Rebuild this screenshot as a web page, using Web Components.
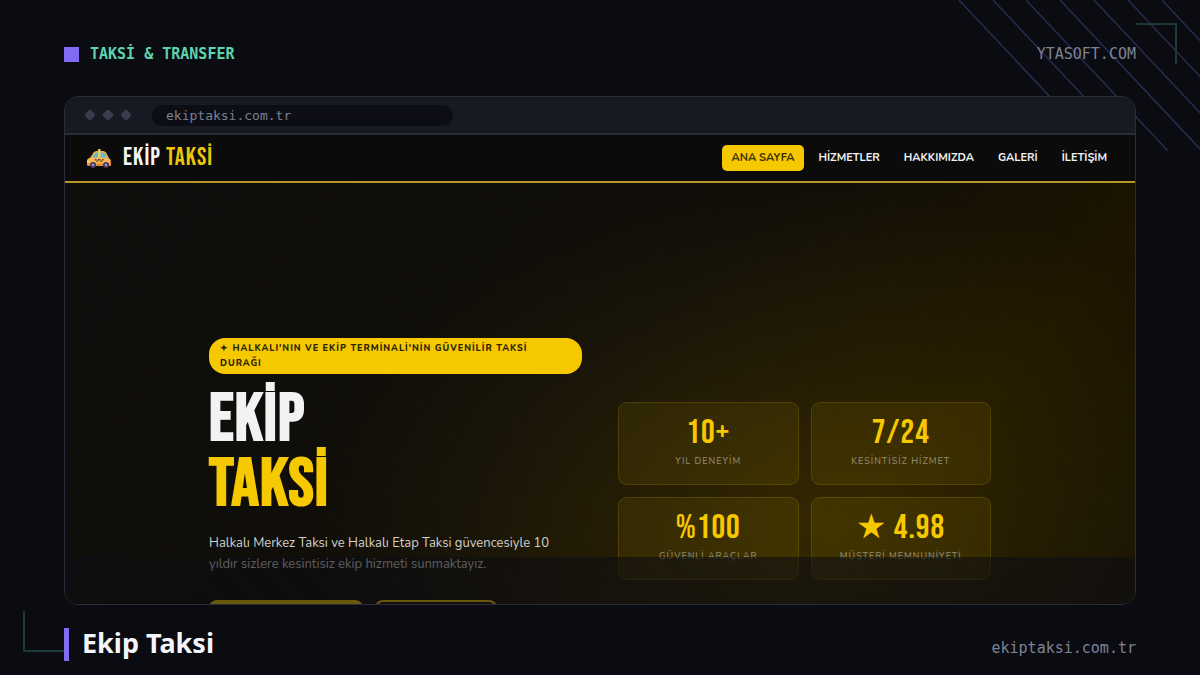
<!DOCTYPE html>
<html lang="tr">
<head>
<meta charset="utf-8">
<title>Ekip Taksi</title>
<style>
  html { height: 100%; }
  body {
    margin: 0;
    height: 100%;
    background: #0b0c11;
    font-family: "Noto Sans", sans-serif;
    color: #f4f5fa;
  }
</style>
</head>
<body>

<showcase-page>
  <a-tag slot="top">TAKSİ &amp; TRANSFER</a-tag>
  <mono-note slot="top">YTASOFT.COM</mono-note>

  <browser-window url="ekiptaksi.com.tr">
    <site-nav>
      <nav-link active>ANA SAYFA</nav-link>
      <nav-link>HİZMETLER</nav-link>
      <nav-link>HAKKIMIZDA</nav-link>
      <nav-link>GALERİ</nav-link>
      <nav-link>İLETİŞİM</nav-link>
    </site-nav>
    <site-hero>
      <stat-card slot="stats" value="10+">YIL DENEYİM</stat-card>
      <stat-card slot="stats" value="7/24">KESİNTİSİZ HİZMET</stat-card>
      <stat-card slot="stats" value="%100">GÜVENLİ ARAÇLAR</stat-card>
      <stat-card slot="stats" value="★ 4.98">MÜŞTERİ MEMNUNİYETİ</stat-card>
    </site-hero>
  </browser-window>

  <page-title slot="bottom">Ekip Taksi</page-title>
  <mono-note slot="bottom">ekiptaksi.com.tr</mono-note>
</showcase-page>

<script>
(function () {
  'use strict';

  const MONO = '"Consolas", "DejaVu Sans Mono", monospace';
  const NARROW = '"Bebas Neue", "Liberation Sans Narrow", sans-serif';
  const ROUND = '"Nunito", "Open Sans", sans-serif';

  function define(name, render) {
    customElements.define(name, class extends HTMLElement {
      connectedCallback() {
        if (this.shadowRoot) return;
        this.attachShadow({ mode: 'open' }).innerHTML = render(this);
      }
    });
  }

  /* ── page frame: top bar, window, bottom bar, decorations ── */
  define('showcase-page', () => `
    <style>
      :host {
        position: relative;
        display: flex;
        flex-direction: column;
        height: 100%;
        box-sizing: border-box;
        padding: 0 64px;
        overflow: hidden;
      }
      header, footer {
        position: relative;
        display: flex;
        box-sizing: border-box;
        justify-content: space-between;
      }
      header { align-items: center; height: 96px; padding-top: 12px; }
      footer { align-items: baseline; height: 70px; padding-top: 23px; }
      main { position: relative; flex: 1; min-height: 0; display: flex; }
      ::slotted(browser-window) { flex: 1; min-width: 0; }
      .lines { position: absolute; top: 0; right: 0; }
      .corner { position: absolute; width: 39px; height: 39px; border: 0 solid #1c3b38; }
      .tr { top: 23px; right: 23px; border-width: 2px 2px 0 0; }
      .bl { bottom: 23px; left: 23px; border-width: 0 0 2px 2px; }
    </style>
    <svg class="lines" width="260" height="151" viewBox="0 0 260 151" stroke="#2e2b56" stroke-width="1.4" aria-hidden="true">
      <path d="M19 0l142 151M53 0l142 151M86 0l142 151M120 0l142 151M154 0l142 151M188 0l142 151M222 0l142 151"/>
    </svg>
    <div class="corner tr"></div>
    <div class="corner bl"></div>
    <header><slot name="top"></slot></header>
    <main><slot></slot></main>
    <footer><slot name="bottom"></slot></footer>
  `);

  define('a-tag', () => `
    <style>
      :host { display: flex; align-items: center; gap: 11px; font: bold 15px/20px ${MONO}; color: #5dd3b0; }
      i { width: 15px; height: 15px; background: #7f6cf0; }
    </style>
    <i></i><span><slot></slot></span>
  `);

  define('mono-note', () => `
    <style>
      :host { display: block; font: 15px/20px ${MONO}; color: #7f8294; }
    </style>
    <slot></slot>
  `);

  define('page-title', () => `
    <style>
      :host { display: block; }
      h2 {
        margin: 0;
        padding: 0 0 3px 13px;
        border-left: 5px solid #7f6cf0;
        font: bold 27px/30px "Segoe UI", "Noto Sans", sans-serif;
        color: #f4f5fa;
      }
    </style>
    <h2><slot></slot></h2>
  `);

  /* ── browser chrome ── */
  define('browser-window', (el) => `
    <style>
      :host {
        display: flex;
        flex-direction: column;
        box-sizing: border-box;
        border: 1px solid #2b2d3a;
        border-radius: 14px;
        overflow: hidden;
        background: #0c0c0c;
      }
      .bar {
        flex: none;
        display: flex;
        align-items: center;
        gap: 13px;
        height: 36px;
        padding-left: 20px;
        background: #171a22;
        border-bottom: 2px solid #2a2c38;
      }
      svg { margin-right: 8px; }
      .url {
        width: 301px;
        padding-left: 14px;
        box-sizing: border-box;
        border-radius: 10px;
        background: #0d0e15;
        font: 13px/21px ${MONO};
        color: #7d8091;
      }
      .view { position: relative; flex: 1; min-height: 0; overflow: hidden; }
      .shade { position: absolute; inset: auto 0 0 0; height: 47px; background: rgba(13, 14, 18, 0.6); }
    </style>
    <div class="bar">
      <svg width="46" height="10" viewBox="0 0 46 10" fill="#3a3b4c" aria-hidden="true">
        <path d="M4 0h2l4 4v2l-4 4h-2l-4-4v-2z"/>
        <path d="M22 0h2l4 4v2l-4 4h-2l-4-4v-2z"/>
        <path d="M40 0h2l4 4v2l-4 4h-2l-4-4v-2z"/>
      </svg>
      <div class="url">${el.getAttribute('url')}</div>
    </div>
    <div class="view"><slot></slot><div class="shade"></div></div>
  `);

  /* ── site ── */
  define('taxi-icon', () => `
    <style>:host { display: block; padding-top: 2px; } svg { display: block; }</style>
    <svg width="26" height="20" viewBox="0 0 26 20" aria-hidden="true">
      <path d="M4 9l3.500-5.500q1-1.500 3-1.500h6.500q2 0 3 1.500l3 5.500z" fill="#eeb04c"/>
      <path d="M6 9l2.800-4.600q.6-.9 1.700-.9h1.700v5.500zM14.400 3.500h2.600q1.100 0 1.700.9l2.800 4.600h-7.100z" fill="#62b8d2"/>
      <rect x="12" y="0" width="2.500" height="9" fill="#e6cf62"/>
      <path d="M1 12q0-3 4-3.500h16q4 1 4 4v3q0 1.500-2 1.500H3q-2 0-2-2z" fill="#f7b552"/>
      <path d="M1 14.500h24v1q0 1.500-2 1.500H3q-2 0-2-1.500z" fill="#df8d3c"/>
      <path d="M9 10h1.500v1.500H9zM12 10h2.500v1.500H12zM16 10h1.500v1.500H16zM10.500 11.500H12V13h-1.500zM14.500 11.500H16V13h-1.500z" fill="#5b4638"/>
      <circle cx="7" cy="16" r="3" fill="#46335f"/><circle cx="7" cy="16" r="1.300" fill="#a29abb"/>
      <circle cx="20" cy="16" r="3" fill="#46335f"/><circle cx="20" cy="16" r="1.300" fill="#a29abb"/>
      <path d="M24 12h1.200v2H24z" fill="#dd4b44"/>
      <path d="M1 12h1.500v1.500H1z" fill="#fff0b0"/>
    </svg>
  `);

  define('site-nav', () => `
    <style>
      :host {
        display: flex;
        align-items: center;
        justify-content: space-between;
        height: 46px;
        padding: 0 18px 0 21px;
        background: #0b0b0b;
        border-bottom: 2px solid #b8952a;
      }
      .brand {
        display: flex;
        align-items: center;
        gap: 11px;
        text-decoration: none;
        font: 25px/28px ${NARROW};
        letter-spacing: 1px;
        color: #f6f6f6;
      }
      b { font-weight: normal; color: #ecc60c; }
      nav { display: flex; gap: 4px; }
    </style>
    <a class="brand" href="#"><taxi-icon></taxi-icon><span>EKİP <b>TAKSİ</b></span></a>
    <nav><slot></slot></nav>
  `);

  define('nav-link', (el) => `
    <style>
      :host { display: block; }
      a {
        display: block;
        padding: 0 10px;
        border-radius: 5px;
        text-decoration: none;
        font: bold 11px/26px ${ROUND};
        color: #f2f2f2;
      }
      .on { background: #f5c800; color: #3b3003; }
    </style>
    <a href="#" class="${el.hasAttribute('active') ? 'on' : ''}"><slot></slot></a>
  `);

  define('site-hero', () => `
    <style>
      :host {
        display: block;
        padding: 155px 20px 80px;
        background:
          repeating-linear-gradient(45deg, transparent 0 27px, rgba(245, 200, 0, 0.012) 27px 28px),
          radial-gradient(ellipse 500px 330px at 70% 62%, rgba(245, 200, 0, 0.11), transparent),
          linear-gradient(135deg, #0d0d0c 0%, #110e08 45%, #1c1400 70%, #0f0d06 100%);
      }
      .inner {
        display: grid;
        grid-template-columns: 1fr 1fr;
        align-items: center;
        gap: 36px;
        max-width: 782px;
        margin: 0 auto;
      }
      .pill {
        padding: 3px 11px;
        border-radius: 16px;
        background: #f5c800;
        font: 800 9px/15px ${ROUND};
        letter-spacing: 1px;
        color: #2b2403;
      }
      h1 { margin: 13px 0 16px; font: bold 68px/65px ${NARROW}; letter-spacing: 1px; color: #f2f2f2; }
      h1 span { display: block; color: #f5c800; }
      p { max-width: 356px; margin: 0 0 25px; font: 13px/21px ${ROUND}; color: #d2d1cd; }
      .actions { display: flex; gap: 12px; }
      button {
        height: 43px;
        width: 154px;
        box-sizing: border-box;
        border: 2px solid #f5c800;
        border-radius: 8px;
        background: #f5c800;
      }
      button + button { width: 122px; background: transparent; }
      .stats { display: grid; grid-template-columns: 1fr 1fr; gap: 12px; }
    </style>
    <div class="inner">
      <div>
        <div class="pill">✦ HALKALI'NIN VE EKİP TERMİNALİ'NİN GÜVENİLİR TAKSİ DURAĞI</div>
        <h1>EKİP <span>TAKSİ</span></h1>
        <p>Halkalı Merkez Taksi ve Halkalı Etap Taksi güvencesiyle 10 yıldır sizlere kesintisiz ekip hizmeti sunmaktayız.</p>
        <div class="actions">
          <button type="button" aria-label="Hemen Ara"></button>
          <button type="button" aria-label="Hizmetler"></button>
        </div>
      </div>
      <div class="stats"><slot name="stats"></slot></div>
    </div>
  `);

  define('stat-card', (el) => `
    <style>
      :host {
        display: block;
        box-sizing: border-box;
        height: 83px;
        padding-top: 12px;
        border: 1px solid rgba(245, 200, 0, 0.14);
        border-radius: 9px;
        background: rgba(245, 200, 0, 0.08);
        text-align: center;
      }
      .value { font: 34px/36px ${NARROW}; letter-spacing: 1px; color: #f5c800; }
      .label { font: 500 9px/20px ${ROUND}; letter-spacing: 1px; color: #918970; }
    </style>
    <div class="value">${el.getAttribute('value')}</div>
    <div class="label"><slot></slot></div>
  `);
})();
</script>
</body>
</html>
